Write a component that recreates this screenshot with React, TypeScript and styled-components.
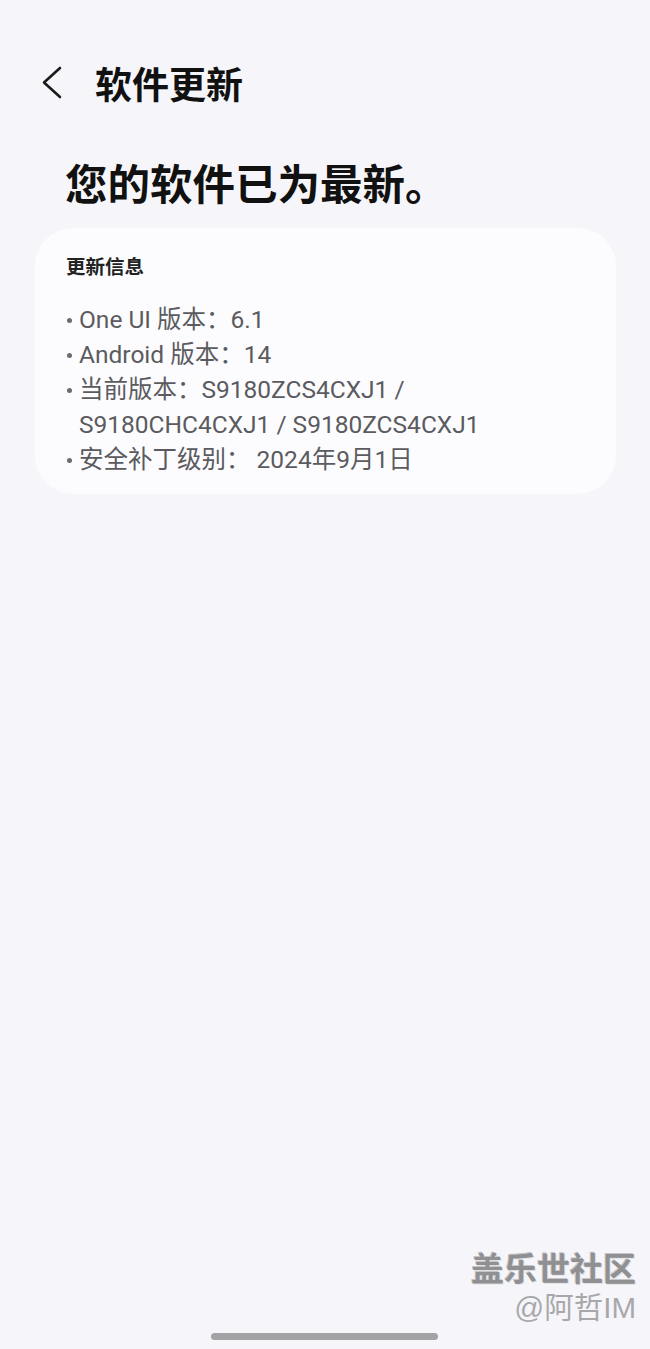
import React from "react";
import styled, { createGlobalStyle } from "styled-components";

const Global = createGlobalStyle`
  html, body { margin: 0; padding: 0; background: #f6f6fa; }
  body { font-family: Roboto, "Noto Sans CJK SC", sans-serif; }
`;

const Page = styled.div`
  width: 650px;
  height: 1349px;
  background: #f6f6fa;
  display: flex;
  flex-direction: column;
  position: relative;
  overflow: hidden;
`;

const Header = styled.header`
  display: flex;
  align-items: center;
  height: 36px;
  padding: 65px 0 0 40px;
`;

const BackButton = styled.button`
  width: 26px;
  height: 36px;
  padding: 0;
  border: none;
  background: none;
  display: flex;
  align-items: center;
  justify-content: center;
  margin-right: 29px;
`;

const Title = styled.h1`
  margin: 0;
  font-family: "Noto Sans CJK SC", sans-serif;
  font-size: 37px;
  font-weight: 700;
  color: #111;
  line-height: 36px;
`;

const Headline = styled.h2`
  margin: 56px 0 0 65px;
  font-family: "Noto Sans CJK SC", sans-serif;
  font-size: 42.5px;
  font-weight: 700;
  color: #111;
  line-height: 50px;
`;

const Card = styled.section`
  margin: 21px 34px 0 35px;
  background: #fcfcfe;
  border-radius: 38px;
  padding: 25px 30px 17px 31px;
  display: flex;
  flex-direction: column;
`;

const CardTitle = styled.h3`
  margin: 0 0 23px 0;
  font-family: "Noto Sans CJK SC", sans-serif;
  font-size: 19.5px;
  font-weight: 700;
  color: #222;
  line-height: 26px;
`;

const List = styled.ul`
  list-style: none;
  margin: 0;
  padding: 0;
  max-width: 440px;
`;

const Item = styled.li`
  position: relative;
  padding-left: 13px;
  font-family: Roboto, "Noto Sans CJK SC", sans-serif;
  font-size: 24.5px;
  line-height: 35px;
  color: #5b5b5f;
  &::before {
    content: "";
    position: absolute;
    left: 1px;
    top: 16px;
    width: 5px;
    height: 5px;
    border-radius: 50%;
    background: #6b6b70;
  }
`;

const Watermark = styled.div`
  position: absolute;
  right: 14px;
  bottom: 24px;
  display: flex;
  flex-direction: column;
  align-items: flex-end;
  font-family: "Noto Sans CJK SC", sans-serif;
`;

const WatermarkMain = styled.div`
  font-size: 33px;
  font-weight: 700;
  line-height: 40px;
  color: #909092;
  text-shadow: 1px 1px 0 #e2e2e6, -1px -1px 0 #c4c4c8;
`;

const WatermarkSub = styled.div`
  font-size: 29.5px;
  line-height: 34px;
  color: #a8a8ab;
  margin-top: 4px;
  font-family: "Liberation Sans", "Noto Sans CJK SC", sans-serif;
`;

const HomeBar = styled.div`
  position: absolute;
  left: 211px;
  bottom: 9px;
  width: 227px;
  height: 7px;
  border-radius: 4px;
  background: #a3a3a6;
`;

export default function App() {
  return (
    <>
      <Global />
      <Page>
        <Header>
          <BackButton aria-label="返回">
            <svg width="26" height="36" viewBox="0 0 26 36">
              <path d="M20 3 L4 17.5 L20 32" fill="none" stroke="#1a1a1a" strokeWidth="2.6" strokeLinecap="round" strokeLinejoin="round" />
            </svg>
          </BackButton>
          <Title>软件更新</Title>
        </Header>
        <Headline>您的软件已为最新。</Headline>
        <Card>
          <CardTitle>更新信息</CardTitle>
          <List>
            <Item>One UI 版本：6.1</Item>
            <Item>Android 版本：14</Item>
            <Item>当前版本：S9180ZCS4CXJ1 / S9180CHC4CXJ1 / S9180ZCS4CXJ1</Item>
            <Item>安全补丁级别： 2024年9月1日</Item>
          </List>
        </Card>
        <Watermark>
          <WatermarkMain>盖乐世社区</WatermarkMain>
          <WatermarkSub>@阿哲IM</WatermarkSub>
        </Watermark>
        <HomeBar />
      </Page>
    </>
  );
}
